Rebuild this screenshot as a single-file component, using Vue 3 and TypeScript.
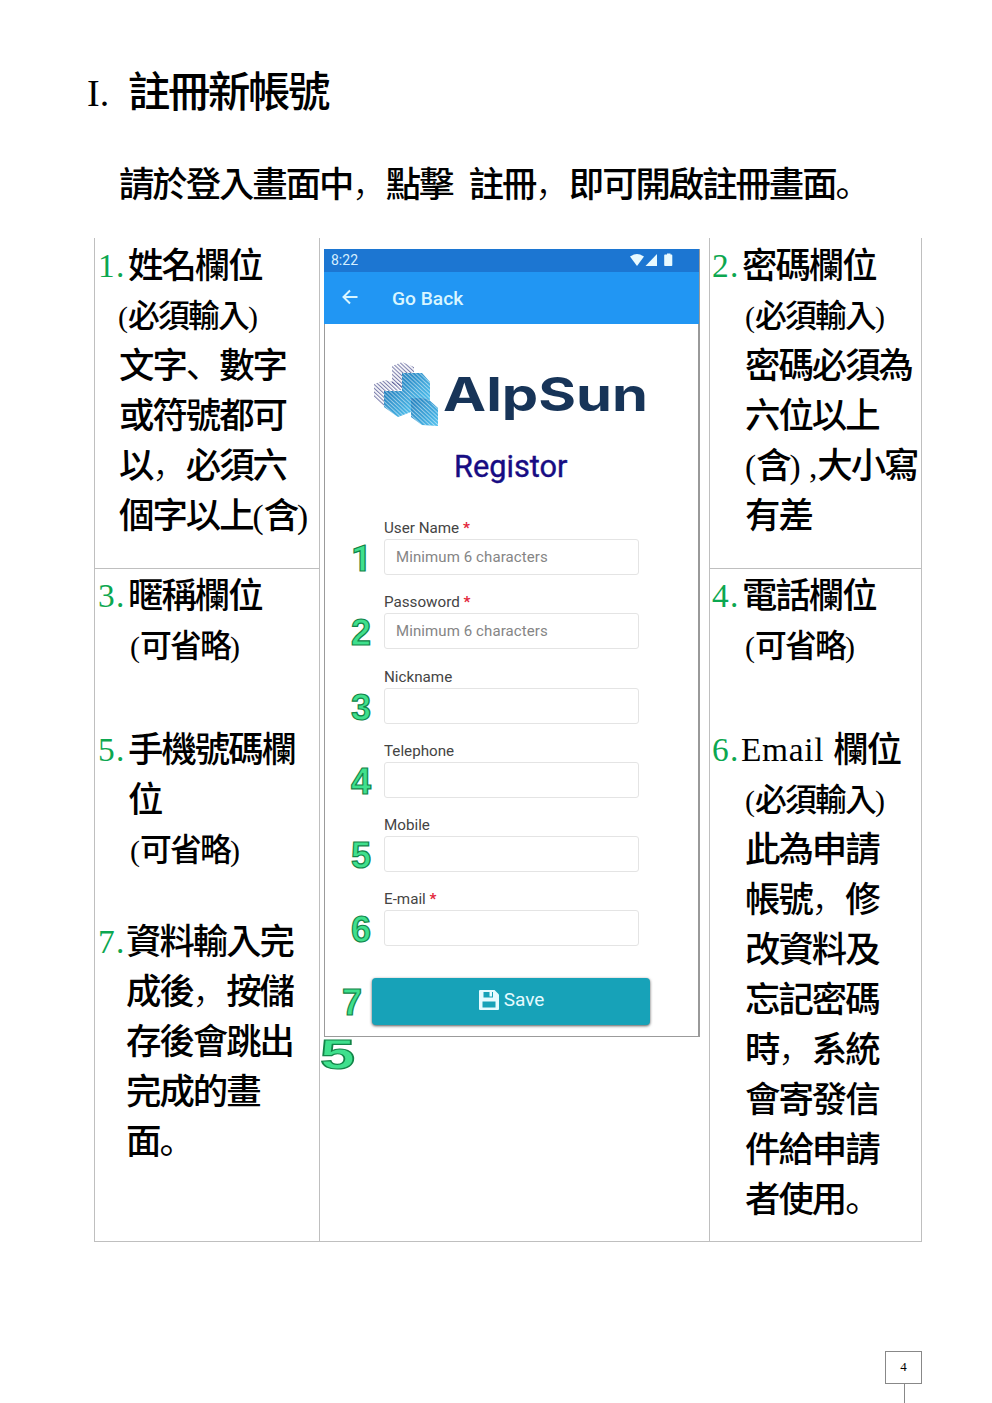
<script setup lang="ts">
import { defineComponent, h } from 'vue'

interface Line { text: string; kind?: 'lead' | 'note' | 'lead-cont' }
interface Item { no: number; cls: string; lines: Line[] }
interface Field { no: number; label: string; required?: boolean; hint?: string }

// Splits mixed text so that ideographs, full-width marks and Latin runs get their own type settings.
const Mixed = defineComponent({
  props: { text: { type: String, required: true } },
  setup(props) {
    return () =>
      (props.text.match(/啟|[，。、]|[\u4e00-\u9fff]+|[^\u4e00-\u9fff，。、]+/g) ?? []).map((run: string) => {
        if (run === '啟') return h('span', { class: 'run-cjk run-thin' }, run)
        if (run === '，') return h('span', { class: 'run-mark run-comma' }, run)
        if (/^[。、]$/.test(run)) return h('span', { class: 'run-mark' }, run)
        if (/^[\u4e00-\u9fff]/.test(run)) return h('span', { class: 'run-cjk' }, run)
        return h('span', { class: 'run-latin' }, run)
      })
  },
})

const topLeft: Item[] = [
  { no: 1, cls: 'item-1', lines: [
    { text: '姓名欄位', kind: 'lead' }, { text: '(必須輸入)', kind: 'note' },
    { text: '文字、數字' }, { text: '或符號都可' }, { text: '以，必須六' }, { text: '個字以上(含)' },
  ] },
]
const topRight: Item[] = [
  { no: 2, cls: 'item-r', lines: [
    { text: '密碼欄位', kind: 'lead' }, { text: '(必須輸入)', kind: 'note' },
    { text: '密碼必須為' }, { text: '六位以上' }, { text: '(含) ,大小寫' }, { text: '有差' },
  ] },
]
const bottomLeft: Item[] = [
  { no: 3, cls: 'item-3', lines: [{ text: '暱稱欄位', kind: 'lead' }, { text: '(可省略)', kind: 'note' }] },
  { no: 5, cls: 'item-5', lines: [
    { text: '手機號碼欄', kind: 'lead' }, { text: '位', kind: 'lead-cont' }, { text: '(可省略)', kind: 'note' },
  ] },
  { no: 7, cls: 'item-7', lines: [
    { text: '資料輸入完', kind: 'lead' }, { text: '成後，按儲' }, { text: '存後會跳出' }, { text: '完成的畫' }, { text: '面。' },
  ] },
]
const bottomRight: Item[] = [
  { no: 4, cls: 'item-r', lines: [{ text: '電話欄位', kind: 'lead' }, { text: '(可省略)', kind: 'note' }] },
  { no: 6, cls: 'item-r item-6', lines: [
    { text: 'Email 欄位', kind: 'lead' }, { text: '(必須輸入)', kind: 'note' },
    { text: '此為申請' }, { text: '帳號，修' }, { text: '改資料及' }, { text: '忘記密碼' },
    { text: '時，系統' }, { text: '會寄發信' }, { text: '件給申請' }, { text: '者使用。' },
  ] },
]
const cells = [
  { area: 'tl', items: topLeft }, { area: 'tr', items: topRight },
  { area: 'bl', items: bottomLeft }, { area: 'br', items: bottomRight },
]
const fields: Field[] = [
  { no: 1, label: 'User Name', required: true, hint: 'Minimum 6 characters' },
  { no: 2, label: 'Passoword', required: true, hint: 'Minimum 6 characters' },
  { no: 3, label: 'Nickname' },
  { no: 4, label: 'Telephone' },
  { no: 5, label: 'Mobile' },
  { no: 6, label: 'E-mail', required: true },
]
</script>

<template>
  <main class="page">
    <h1 class="title"><span class="roman">I.</span><Mixed text="註冊新帳號" /></h1>
    <p class="intro"><Mixed text="請於登入畫面中，點擊 註冊，即可開啟註冊畫面。" /></p>

    <div class="table">
      <section v-for="cell in cells" :key="cell.area" class="cell" :class="cell.area">
        <div v-for="item in cell.items" :key="item.no" class="item" :class="item.cls">
          <div v-for="(line, i) in item.lines" :key="i" class="line" :class="line.kind ?? 'body'">
            <span v-if="i === 0" class="num">{{ item.no }}.</span><Mixed :text="line.text" />
          </div>
        </div>
      </section>

      <section class="cell mid">
        <div class="phone">
          <div class="status">
            <span>8:22</span>
            <svg width="44" height="14" viewBox="0 0 44 14" fill="#e8faff">
              <path d="M0 3.6Q7 -1.6 14 3.6L7 13Z" />
              <path d="M27 1V13H15.500Z" />
              <path d="M36 1.600h1V.4h3.500v1.200h1q.8 0 .8.8v9.800q0 .8-.8.8H35q-.8 0-.8-.8V2.400q0-.8.8-.8Z" />
            </svg>
          </div>
          <div class="appbar">
            <svg width="16" height="16" viewBox="0 0 16 16" fill="none" stroke="#d9f6ff" stroke-width="2">
              <path d="M15.500 8H2M8 1.500L1.500 8L8 14.500" />
            </svg>
            <span>Go Back</span>
          </div>
          <div class="brand">
            <svg width="276" height="68" viewBox="0 0 276 68">
              <defs>
                <pattern id="hatch" width="2.800" height="3" patternUnits="userSpaceOnUse" patternTransform="rotate(-47)">
                  <rect width="1" height="3" fill="#fff" opacity=".5" />
                </pattern>
                <pattern id="lines" width="2.800" height="3" patternUnits="userSpaceOnUse" patternTransform="rotate(-47)">
                  <rect width="1.100" height="3" fill="#46498a" opacity=".7" />
                </pattern>
                <linearGradient id="sky" x1="0" y1="0" x2="1" y2="1">
                  <stop offset="0" stop-color="#247fbd" /><stop offset="1" stop-color="#4fc0ee" />
                </linearGradient>
              </defs>
              <path d="M18 4L28 0L40 5V13L28 15V27L18 21Z" fill="url(#lines)" />
              <path d="M0 22L11 18L28 22V28L10 30V44L0 36Z" fill="url(#lines)" />
              <path d="M28 11H48L56 20V38L48 36H36L28 30Z" fill="url(#sky)" />
              <path d="M10 29L28 29L37 38V50L24 55L10 45Z" fill="url(#sky)" />
              <path d="M37 37H54L64 46V64L48 63L37 55Z" fill="url(#sky)" />
              <path d="M28 30L36 36H48L54 37H37V38Z" fill="#2d8cc8" />
              <path d="M28 11H48L56 20V39H54L64 46V64L48 63L37 55V50L24 55L10 45V29H28Z" fill="url(#hatch)" />
              <text x="69" y="49" textLength="205" lengthAdjust="spacingAndGlyphs" class="wordmark">AlpSun</text>
            </svg>
          </div>
          <h2 class="heading">Registor</h2>
          <div class="form">
            <div v-for="f in fields" :key="f.no" class="field">
              <label>{{ f.label }} <b v-if="f.required">*</b></label>
              <span class="marker" :class="{ footless: f.no === 1 }">{{ f.no }}</span>
              <div class="input">{{ f.hint }}</div>
            </div>
          </div>
          <div class="save-row">
            <span class="marker">7</span>
            <button type="button" class="save">
              <svg width="20" height="20" viewBox="0 0 20 20">
                <path d="M1 0H15.500L20 4.500V19q0 1-1 1H1q-1 0-1-1V1q0-1 1-1Z" fill="#e6fbff" />
                <path d="M4.500 2H14V7.500H4.500ZM3.500 11.500H16.500V17.500H3.500Z" fill="#17a2b8" />
                <path d="M10.500 2H13V6.500H10.500Z" fill="#e6fbff" />
              </svg>
              <span>Save</span>
            </button>
          </div>
        </div>
        <span class="marker stray">5</span>
      </section>
    </div>

    <footer class="folio"><span>4</span><i></i></footer>
  </main>
</template>

<style>
body { background: #fff; }
.run-cjk, .run-mark { font-size: 1.06em; letter-spacing: -0.0566em; }
.run-cjk { font-weight: 500; }
.run-mark { font-family: "Noto Sans CJK SC", sans-serif; line-height: 0; }
.run-comma { font-weight: 300; }
.run-thin { font-weight: 300; -webkit-text-stroke: 1.200px #fff; }
.run-latin { white-space: pre; }
</style>

<style scoped>
* { box-sizing: border-box; }
.page {
  width: 992px; height: 1403px; overflow: hidden; background: #fff; color: #000;
  font-family: "Liberation Serif", "Noto Sans CJK TC", serif;
  display: flex; flex-direction: column;
}
.title { margin: 68px 0 0 87px; height: 50px; line-height: 50px; font-size: 40px; font-weight: 400; white-space: nowrap; display: flex; }
.roman { width: 41px; font-size: 38px; }
.intro { margin: 42px 0 0 119px; height: 50px; line-height: 50px; font-size: 33.35px; white-space: nowrap; word-spacing: 8px; }
.table {
  margin: 28px 0 0 94px; width: 828px; height: 1004px; flex: none;
  display: grid; grid-template-columns: 226px 390px 212px; grid-template-rows: 331px 673px;
  grid-template-areas: "tl mid tr" "bl mid br";
}
.cell { border: 0 solid #bfbfbf; border-bottom-width: 1px; border-right-width: 1px; min-width: 0; }
.tl { grid-area: tl; border-left-width: 1px; padding-top: 3px; }
.bl { grid-area: bl; border-left-width: 1px; padding-top: 2px; }
.tr { grid-area: tr; padding-top: 3px; }
.br { grid-area: br; padding-top: 2px; }
.mid { grid-area: mid; padding: 11px 0 0 4px; }

.line { height: 50px; line-height: 50px; font-size: 33.4px; white-space: nowrap; padding-left: var(--body); }
.note { font-size: 30px; margin: 1px 0 -1px; padding-left: var(--note); }
.lead { padding-left: 3px; display: flex; }
.lead-cont { padding-left: 33px; }
.num { color: #0ca750; width: 30px; letter-spacing: 1.200px; flex: none; }
.item-1 { --body: 24px; --note: 23px; }
.item-3, .item-5 { --note: 35px; }
.item-7 { --body: 31px; margin-top: 42px; }
.item-7 .num { width: 28px; }
.item-5, .item-6 { margin-top: 54px; }
.item-r { --body: 35px; --note: 35px; }
.item-r .lead { padding-left: 2px; }
.item-6 .lead { white-space: pre; letter-spacing: .7px; }
.item-6 .lead .num { width: 29px; }

.phone { width: 376px; height: 788px; border: 1px solid #9b9b9b; border-top: 0; border-right: 2px solid #999; background: #fff; font-family: Roboto, sans-serif; }
.status { height: 23px; margin: 0 -1px; background: #1c76d2; color: #d5efff; display: flex; justify-content: space-between; align-items: center; padding: 0 25px 1px 7px; font-size: 14px; }
.appbar { height: 52px; margin: 0 -1px; background: #2196f3; color: #d9f6ff; display: flex; align-items: center; padding-left: 18px; gap: 34px; font-size: 19.200px; font-weight: 500; }
.appbar svg { margin-top: -3px; }
.brand { height: 68px; margin: 38px 0 0 49px; }
.brand svg { display: block; }
.wordmark { font-family: Inter, sans-serif; font-size: 46px; font-weight: 700; fill: #173458; }
.heading { margin: 17px 0 0; height: 40px; line-height: 40px; font-size: 30.700px; font-weight: 400; color: #170c83; -webkit-text-stroke: .4px #170c83; padding-left: 129px; }
.form { margin-top: 30px; }
.field { height: 74.300px; display: grid; grid-template-columns: 59px 255px; grid-template-rows: 22px 36px; }
.field label { grid-column: 2; line-height: 22px; font-size: 15.200px; color: #444; }
.field label b { color: #e3263a; font-weight: 700; }
.input { height: 36px; line-height: 34px; border: 1px solid #e4e4e4; border-radius: 3px; padding-left: 11px; color: #858585; font-size: 15px; letter-spacing: .1px; }
.marker { font-family: "Liberation Sans", Arial, sans-serif; font-weight: 700; font-size: 36px; line-height: 40px; color: #3fe08d; -webkit-text-stroke: 1.200px #128548; padding-left: 26px; }
.footless { font-family: Roboto, sans-serif; }
.save-row { display: flex; margin-top: 15px; }
.save-row .marker { width: 47px; padding: 5px 0 0 17px; }
.save { width: 278px; height: 47px; border: 0; border-radius: 4px; background: #17a2b8; box-shadow: 0 1px 3px #555; display: flex; align-items: center; justify-content: center; gap: 5px; padding: 0 0 3px 1px; color: #e6fbff; font: 400 19px Roboto, sans-serif; }
.stray { display: block; width: 40px; height: 40px; padding: 0; line-height: 33px; font-size: 42px; margin: 1px 0 0 -4px; transform: scaleX(1.500); transform-origin: left; }
.folio { margin: 109px 0 0 885px; width: 37px; display: flex; flex-direction: column; align-items: center; font-size: 13px; }
.folio span { width: 37px; height: 33px; line-height: 30px; border: 1px solid #888; text-align: center; }
.folio i { width: 1px; height: 20px; background: #888; margin-left: 2px; }
</style>
